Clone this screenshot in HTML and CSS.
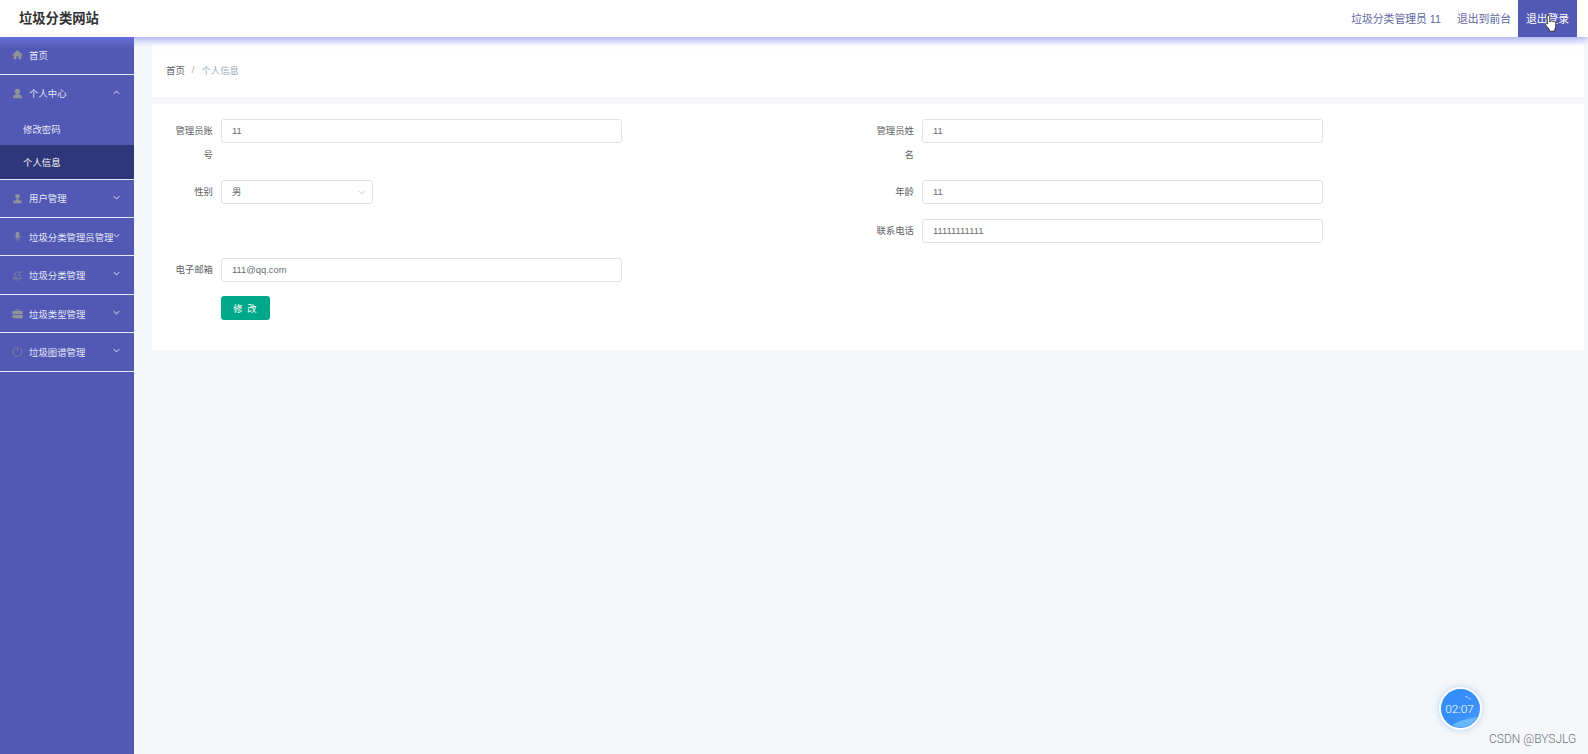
FILE: index.html
```html
<!DOCTYPE html>
<html lang="zh-CN">
<head>
<meta charset="utf-8">
<title>垃圾分类网站</title>
<link rel="stylesheet" href="styles.css">
</head>
<body>
<header class="topbar">
  <div class="brand">垃圾分类网站</div>
  <div class="top-actions">
    <span class="top-user">垃圾分类管理员 11</span>
    <span class="top-link">退出到前台</span>
    <span class="top-logout">退出登录</span>
  </div>
</header>
<div class="shell">
  <aside class="sidebar">
    <div class="item item-home">
      <svg class="ic" viewBox="0 0 16 16"><path d="M8 1.500 .8 8.500v1H2.500V15h4v-4h3v4h4V9.500h1.700v-1z"/></svg>
      <span class="item-text">首页</span>
    </div>
    <div class="item item-head">
      <svg class="ic" viewBox="0 0 16 16"><circle cx="8" cy="5" r="3.800"/><path d="M1.500 15c0-4.500 2.800-6 6.500-6s6.500 1.500 6.500 6z"/></svg>
      <span class="item-text">个人中心</span>
      <svg class="chev" viewBox="0 0 10 6"><path d="M1 5l4-4 4 4"/></svg>
    </div>
    <div class="sub">修改密码</div>
    <div class="sub sub-active">个人信息</div>
    <div class="item">
      <svg class="ic" viewBox="0 0 16 16"><circle cx="8" cy="4.800" r="3.300"/><path d="M6.500 8h3l.5 2.800h4V15H2v-4.200h4z"/></svg>
      <span class="item-text">用户管理</span>
      <svg class="chev" viewBox="0 0 10 6"><path d="M1 1l4 4 4-4"/></svg>
    </div>
    <div class="item">
      <svg class="ic" viewBox="0 0 16 16"><rect x="5.300" y="1" width="5.400" height="9.500" rx="2.700"/><path class="ic-line" d="M3.500 7.500c0 6 9 6 9 0M8 12.500V15.500"/></svg>
      <span class="item-text">垃圾分类管理员管理</span>
      <svg class="chev" viewBox="0 0 10 6"><path d="M1 1l4 4 4-4"/></svg>
    </div>
    <div class="item">
      <svg class="ic" viewBox="0 0 16 16"><path class="ic-line" d="M4 10V7a4.200 4.200 0 0 1 7-3.200M12 6.500v3.500l1.800 2.500H2M6.500 14.500h3M1.500 15 14.500 1.500"/></svg>
      <span class="item-text">垃圾分类管理</span>
      <svg class="chev" viewBox="0 0 10 6"><path d="M1 1l4 4 4-4"/></svg>
    </div>
    <div class="item">
      <svg class="ic" viewBox="0 0 16 16"><path d="M5 4.500V2h6v2.500h4.500V9H.5V4.500zM6.300 4.500h3.400V3.300H6.300zM.5 10h15v5H.5z"/></svg>
      <span class="item-text">垃圾类型管理</span>
      <svg class="chev" viewBox="0 0 10 6"><path d="M1 1l4 4 4-4"/></svg>
    </div>
    <div class="item">
      <svg class="ic" viewBox="0 0 16 16"><path class="ic-line" d="M5 2.800a6.500 6.500 0 1 0 6 0M8 .5v6.500"/></svg>
      <span class="item-text">垃圾图谱管理</span>
      <svg class="chev" viewBox="0 0 10 6"><path d="M1 1l4 4 4-4"/></svg>
    </div>
  </aside>
  <main class="content">
    <nav class="crumbs">
      <span class="crumb-home">首页</span>
      <span class="crumb-sep">/</span>
      <span class="crumb-current">个人信息</span>
    </nav>
    <section class="card">
      <form class="form">
        <div class="field field-tall">
          <label class="label">管理员账号</label>
          <div class="input">11</div>
        </div>
        <div class="field field-tall">
          <label class="label">管理员姓名</label>
          <div class="input">11</div>
        </div>
        <div class="field field-mid">
          <label class="label">性别</label>
          <div class="input input-select">男
            <svg class="select-chev" viewBox="0 0 10 6"><path d="M1 1l4 4 4-4"/></svg>
          </div>
        </div>
        <div class="field field-mid">
          <label class="label">年龄</label>
          <div class="input">11</div>
        </div>
        <div class="field field-mid"></div>
        <div class="field field-mid">
          <label class="label">联系电话</label>
          <div class="input">11111111111</div>
        </div>
        <div class="field field-short">
          <label class="label">电子邮箱</label>
          <div class="input">111@qq.com</div>
        </div>
        <div class="field field-short"></div>
        <div class="field">
          <span class="label"></span>
          <button class="btn" type="button">修 改</button>
        </div>
      </form>
    </section>
  </main>
</div>
<svg class="cursor" viewBox="0 0 16 22"><path d="M5 1.500c1 0 1.500.6 1.500 1.500v6l1-.3V8c1-.5 1.800 0 2 .5 1-.5 1.800 0 2 .6 1-.3 2 .3 2 1.400v4c0 1.500-.8 2.500-1.200 3.500v2H6v-2c-1-1.500-2.500-3-4-5-.8-1.200.6-2.500 1.800-1.500l-.3-9c0-.8.500-1.500 1.500-1.500z"/></svg>
<div class="timer">
  <svg class="timer-art" viewBox="0 0 40 40"><path class="timer-wave" d="M12 37c6-5 14-6 25-8-3 6-9 10-17 10-3 0-6-.5-8-2z"/><path class="timer-arc" d="M25 7.500c2 .6 4 1.800 5.500 3.200"/></svg>
  <span class="timer-text">02:07</span>
</div>
<div class="watermark">CSDN @BYSJLG</div>
</body>
</html>
```

FILE: styles.css
```css
* { box-sizing: border-box; }
html, body { margin: 0; height: 100%; overflow: hidden; }
body {
  font-family: "Liberation Sans", "Noto Sans CJK SC", sans-serif;
  background: #f5f7fa;
  color: #606266;
}
.topbar {
  position: relative;
  z-index: 2;
  height: 37px;
  background: #fff;
  display: flex;
  align-items: center;
  justify-content: space-between;
  padding-left: 19px;
  box-shadow: 0 2px 8px rgba(90, 100, 250, 0.6);
}
.brand { font-size: 13.3px; font-weight: 700; color: #303133; padding-bottom: 2px; }
.top-actions { display: flex; align-items: stretch; height: 37px; font-size: 10.8px; color: #5f669f; }
.top-user, .top-link { display: flex; align-items: center; padding-bottom: 2px; }
.top-user { margin-right: 16px; }
.top-link { margin-right: 7px; }
.top-logout {
  width: 59px;
  margin-right: 11px;
  padding-bottom: 2px;
  background: #5159b5;
  color: #fff;
  display: flex;
  align-items: center;
  justify-content: center;
}
.shell { display: flex; height: 717px; }
.sidebar {
  width: 134px;
  flex: none;
  background: linear-gradient(#6a72c9, #5159b5 12px);
  font-size: 9.4px;
  color: #e6e7f5;
}
.item {
  height: 38.45px;
  display: flex;
  align-items: center;
  padding-left: 12px;
  position: relative;
  border-bottom: 1px solid #e8e9f6;
}
.item-home { height: 38px; padding-bottom: 2px; }
.item-head { height: 37px; border-bottom: 0; padding-bottom: 1px; }
.ic { width: 11px; height: 11px; margin-right: 6px; fill: #909399; flex: none; }
.ic-line { fill: none; stroke: #909399; stroke-width: 1; }
.item-text { white-space: nowrap; }
.chev {
  position: absolute;
  left: 113px;
  top: 15px;
  width: 7px;
  height: 5px;
  fill: none;
  stroke: #fff;
  stroke-width: 1.2;
}
.sub { height: 33px; display: flex; align-items: center; padding-left: 23px; }
.sub-active {
  height: 34.500px;
  background: #2f3679;
  color: #fff;
  border-bottom: 1px solid #e8e9f6;
}
.content { flex: 1; padding: 7px 4px 0 18px; }
.crumbs {
  height: 53px;
  background: #fff;
  display: flex;
  align-items: center;
  padding-left: 14px;
  padding-bottom: 2px;
  font-size: 9.4px;
  margin-bottom: 7px;
}
.crumb-home { color: #606266; }
.crumb-sep { color: #aab0bb; margin: 0 7px; }
.crumb-current { color: #97a8be; }
.card { height: 246px; background: #fff; padding: 15px 0 0 0; }
.form { display: grid; grid-template-columns: 701px 701px; }
.field { display: flex; align-items: flex-start; font-size: 9.4px; }
.field-tall { height: 61px; }
.field-mid { height: 39px; }
.field-short { height: 38px; }
.label {
  width: 69px;
  padding: 0 8px 0 22px;
  flex: none;
  text-align: right;
  line-height: 24px;
  color: #606266;
}
.input {
  width: 401px;
  height: 24px;
  padding-left: 10px;
  border: 1px solid #e0e3e9;
  border-radius: 3px;
  background: #fff;
  line-height: 22px;
  color: #6a6c72;
  position: relative;
  flex: none;
}
.input-select { width: 152px; }
.select-chev {
  position: absolute;
  right: 6px;
  top: 9px;
  width: 8px;
  height: 5px;
  fill: none;
  stroke: #c0c4cc;
  stroke-width: 1;
}
.btn {
  width: 49px;
  height: 24px;
  padding: 0;
  border: 0;
  border-radius: 3px;
  background: #00a88a;
  color: #fff;
  font: inherit;
  font-size: 9.4px;
  letter-spacing: 1px;
}
.cursor {
  position: absolute;
  z-index: 3;
  left: 1544px;
  top: 14px;
  width: 14px;
  height: 19px;
  fill: #fff;
  stroke: #222;
  stroke-width: 1;
}
.timer {
  position: absolute;
  left: 1441px;
  top: 689px;
  width: 39px;
  height: 39px;
  border-radius: 50%;
  overflow: hidden;
  background: linear-gradient(140deg, #2f8cf6 0%, #3a8ffb 60%, #46a3f8 100%);
  box-shadow: 0 0 0 2px #fff, 0 0 6px 2px rgba(120, 170, 230, 0.5);
  color: #fff;
  display: flex;
  align-items: center;
  justify-content: center;
}
.timer-art { position: absolute; left: 0; top: 0; width: 39px; height: 39px; }
.timer-wave { fill: #7fc6f7; opacity: 0.7; }
.timer-arc { fill: none; stroke: #d5e8ff; stroke-width: 1; stroke-dasharray: 3 1; }
.timer-text { position: relative; left: -1px; font-family: Roboto, sans-serif; font-weight: 300; font-size: 11.8px; }
.watermark {
  position: absolute;
  left: 1489px;
  top: 732px;
  font-family: Roboto, sans-serif;
  font-weight: 300;
  font-size: 12px;
  color: #70737a;
}
```
